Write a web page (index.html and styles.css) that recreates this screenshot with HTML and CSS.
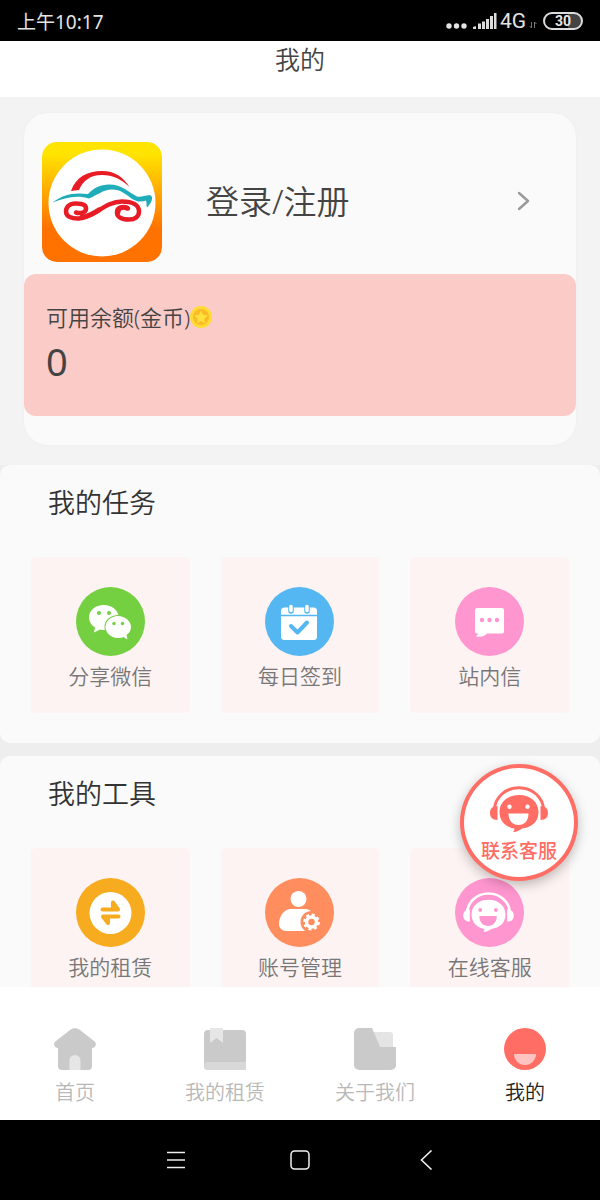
FILE: index.html
```html
<!DOCTYPE html>
<html lang="zh-CN">
<head>
<meta charset="utf-8">
<meta name="viewport" content="width=device-width, initial-scale=1">
<title>我的</title>
<link rel="stylesheet" href="styles.css">
</head>
<body>
<svg class="defs" aria-hidden="true">
  <symbol id="agent" viewBox="0 0 58 46">
    <path d="M4.500 24A24.500 22.300 0 0 1 53.500 24" fill="none" stroke="currentColor" stroke-width="3"/>
    <path d="M7.500 20v14C2 34 0 31 0 27s2-7 7.500-7zM50.500 20v14c5.500 0 7.500-3 7.500-7s-2-7-7.500-7z" fill="currentColor"/>
    <path fill-rule="evenodd" fill="currentColor" d="M29 9C17.500 9 9.500 16 9.500 26c0 9 6 15 14.500 16.500c1 1 0 2-1 3.500c4 0 7-2 9-3.500c10-1 16.500-7 16.500-16.500c0-10-8-17-19.500-17zM19.500 18.500a2.200 2.200 0 1 1 0 4.400a2.200 2.200 0 1 1 0-4.400zM37.500 18.500a2.200 2.200 0 1 1 0 4.400a2.200 2.200 0 1 1 0-4.400zM18.500 27.500h20c0 7-4 11.500-10 11.500s-10-4.500-10-11.500z"/>
  </symbol>
</svg>
<div class="screen">
  <div class="status">
    <span class="time">上午10:17</span>
    <div class="signals">
      <svg width="21" height="20" viewBox="0 0 21 20" fill="#e4e4e4"><circle cx="3" cy="15" r="2.700"/><circle cx="10.500" cy="15" r="2.700"/><circle cx="18" cy="15" r="2.700"/></svg>
      <svg class="bars" width="24" height="20" viewBox="0 0 24 20" fill="#dcdcdc"><path d="M0 18v-2l3-1v3zM5 12.500h3V18H5zM9 10.500h3V18H9zM13 8h3v10h-3zM17 5h3v13h-3zM21 2h2.500v16H21z"/></svg>
      <span class="network">4G</span>
      <svg width="8" height="20" viewBox="0 0 8 20" fill="none" stroke="#777"><path d="M2.500 11v6M2.500 17l-2-2M5.500 17v-6M5.500 11l2 2"/></svg>
      <span class="battery">30</span>
    </div>
  </div>

  <header class="topbar"><h1>我的</h1></header>

  <main class="content">
    <section class="profile">
      <div class="card">
        <a class="login" href="#">
          <svg class="logo" viewBox="0 0 120 120">
            <defs><linearGradient id="sun" x1="0" y1="0" x2="0" y2="1"><stop offset=".1" stop-color="#ffe400"/><stop offset=".4" stop-color="#ffac00"/><stop offset=".72" stop-color="#ff7200"/></linearGradient></defs>
            <rect width="120" height="120" rx="15" fill="url(#sun)"/>
            <circle cx="60" cy="61" r="53.500" fill="#fff"/>
            <path d="M29 49C34 35 45 29 60 29c13 0 21 6 27.500 16C79 37 71 33 60 33c-12 0-19 6-23 15z" fill="#e81c24"/>
            <path d="M10.500 60.500C20 53 31 50 46 52c6-6 12-9.500 21-9.500c13 0 20 8 28 12c5 1 9-2 14-1c3 3-1 9-4 12c-1-2 0-5-1-7c-5 2-9 1-13-1c-7-5-12-10-21-10c-9 0-15 6-23 9c-12-4-24-1-36.500 4z" fill="#20acb8"/>
            <path d="M34 70.500c5 1.500 10 0 10-4c0-4-5-5-10-5c-7 0-10 4-10 8c0 5 6 7.500 13 7c15-1 26-17 43-17c11 0 17 4 17 10c0 5-4 8-10 8c-8 0-12-3-12-7c0-5 5-6.500 11-4" fill="none" stroke="#e81c24" stroke-width="4.500" stroke-linecap="round"/>
            <path d="M76 70c0-4 5-6 9-4M40 75c6 0 12-4 17-7" fill="none" stroke="#e81c24" stroke-width="5" stroke-linecap="round"/>
          </svg>
          <span class="login-text">登录/注册</span>
          <svg class="chevron" width="14" height="20" viewBox="0 0 14 20" fill="none" stroke="#999" stroke-width="2.400" stroke-linecap="round" stroke-linejoin="round"><path d="M2 2l9 8-9 8"/></svg>
        </a>
        <div class="balance">
          <div class="balance-label">可用余额(金币)<svg width="22" height="22" viewBox="0 0 22 22"><circle cx="11" cy="11" r="11" fill="#fddc35"/><circle cx="11" cy="11" r="8" fill="#fdb927"/><path d="M11 4.500l2 4.300 4.700.6-3.400 3.300.8 4.700-4.100-2.300-4.100 2.300.8-4.700-3.400-3.300 4.700-.6z" fill="#ffe23c"/></svg></div>
          <div class="balance-value">0</div>
        </div>
      </div>
    </section>

    <section class="group">
      <h2>我的任务</h2>
      <div class="tiles">
        <a class="tile" href="#">
          <svg class="icon" viewBox="0 0 69 69"><circle cx="34.500" cy="34.500" r="34.500" fill="#74d041"/>
            <path d="M28 18c-9 0-15 5.500-15 12.500c0 4 2 7.500 6 10L18 45.500l6-3c2 .5 4 .6 6 .5L43 30C42 23 36 18 28 18z" fill="#fff"/>
            <ellipse cx="42" cy="40" rx="13.500" ry="12" fill="#74d041"/>
            <path d="M42 29c-7 0-12.500 5-12.500 11S35 51 42 51c2 0 4-.3 5.500-1l4 2.500-1-4.500c3-2 4.500-5 4.500-8c0-6-6-11-13-11z" fill="#fff"/>
            <g fill="#74d041"><circle cx="23" cy="26" r="2"/><circle cx="33" cy="26" r="2"/><circle cx="38" cy="36.500" r="1.700"/><circle cx="46.500" cy="36.500" r="1.700"/></g></svg>
          <span>分享微信</span>
        </a>
        <a class="tile" href="#">
          <svg class="icon" viewBox="0 0 69 69"><circle cx="34.500" cy="34.500" r="34.500" fill="#55b7f1"/>
            <rect x="16" y="20.500" width="36" height="32.500" rx="3.500" fill="#fff"/><path d="M16 28.500h36" stroke="#55b7f1" stroke-width="1.300"/>
            <path d="M26 20v4M42 20v4" stroke="#55b7f1" stroke-width="5.500" stroke-linecap="round"/><path d="M26 19.500v4M42 19.500v4" stroke="#fff" stroke-width="3.500" stroke-linecap="round"/>
            <path d="M26 39l6.500 6.500L42 35.500" fill="none" stroke="#55b7f1" stroke-width="4" stroke-linecap="round" stroke-linejoin="round"/></svg>
          <span>每日签到</span>
        </a>
        <a class="tile" href="#">
          <svg class="icon" viewBox="0 0 69 69"><circle cx="34.500" cy="34.500" r="34.500" fill="#ff96cf"/>
            <path d="M22 21h25a2 2 0 0 1 2 2v21.500a2 2 0 0 1-2 2H32c-2 2.500-6 4-11 3l2.500-3H22a2 2 0 0 1-2-2V23a2 2 0 0 1 2-2z" fill="#fff"/>
            <g fill="#ff96cf"><circle cx="27" cy="33" r="2.200"/><circle cx="34.500" cy="33" r="2.200"/><circle cx="42" cy="33" r="2.200"/></g></svg>
          <span>站内信</span>
        </a>
      </div>
    </section>

    <section class="group">
      <h2>我的工具</h2>
      <div class="tiles">
        <a class="tile" href="#">
          <svg class="icon" viewBox="0 0 69 69"><circle cx="34.500" cy="34.500" r="34.500" fill="#f7ab1f"/><circle cx="34.500" cy="35" r="21" fill="#fff"/>
            <path d="M26.500 31.500H42L37 24.500V31M42.500 38.500H27l5 6.500V39" fill="none" stroke="#f7ab1f" stroke-width="4" stroke-linecap="round" stroke-linejoin="round"/></svg>
          <span>我的租赁</span>
        </a>
        <a class="tile" href="#">
          <svg class="icon" viewBox="0 0 69 69"><circle cx="34.500" cy="34.500" r="34.500" fill="#ff8d5e"/>
            <circle cx="33.500" cy="21" r="8" fill="#fff"/><path d="M26 31h14c3 0 5 1 7 3v19H21c-4 0-7-3-7-7c0-8 5-15 12-15z" fill="#fff"/>
            <circle cx="46.500" cy="44" r="11" fill="#ff8d5e"/><circle cx="46.500" cy="44" r="5" fill="none" stroke="#fff" stroke-width="3.500"/>
            <circle cx="46.500" cy="44" r="7.200" fill="none" stroke="#fff" stroke-width="2.400" stroke-dasharray="3 2.650"/></svg>
          <span>账号管理</span>
        </a>
        <a class="tile" href="#">
          <svg class="icon" viewBox="0 0 69 69"><circle cx="34.500" cy="34.500" r="34.500" fill="#ff96cf"/><use href="#agent" x="8" y="14" width="51" height="40" color="#fff"/></svg>
          <span>在线客服</span>
        </a>
      </div>
    </section>
  </main>

  <nav class="tabs">
    <a href="#"><svg width="42" height="42" viewBox="0 0 42 42"><path d="M16 2c3-2.500 7-2.500 10 0l14 11c4 3 1 7-2 7v18a4 4 0 0 1-4 4H8a4 4 0 0 1-4-4V20c-3 0-6-4-2-7z" fill="#cacaca"/><path d="M15.500 42V32.500a5.500 5.500 0 0 1 11 0V42z" fill="#e6e6e6"/></svg><span>首页</span></a>
    <a href="#"><svg width="42" height="42" viewBox="0 0 42 42"><path d="M4 2h34a4 4 0 0 1 4 4v36H4a4 4 0 0 1-4-4V6a4 4 0 0 1 4-4z" fill="#cacaca"/><path d="M42 34H4a4 4 0 0 0-4 4a4 4 0 0 0 4 4h38z" fill="#d8d8d8"/><path d="M6 0h13v15l-6.500-5L6 15z" fill="#e6e6e6"/></svg><span>我的租赁</span></a>
    <a href="#"><svg width="42" height="42" viewBox="0 0 42 42"><path d="M17 4h19a3 3 0 0 1 3 3v14H20z" fill="#e4e4e4"/><path d="M5 0h13l8 19h16v18a5 5 0 0 1-5 5H5a5 5 0 0 1-5-5V5a5 5 0 0 1 5-5z" fill="#cacaca"/></svg><span>关于我们</span></a>
    <a class="active" href="#" aria-current="page"><svg width="42" height="42" viewBox="0 0 42 42"><circle cx="21" cy="21" r="21" fill="#ff6d64"/><path d="M10 26h22a11 11 0 0 1-22 0z" fill="#ffc4c1"/></svg><span>我的</span></a>
  </nav>

  <div class="system">
    <button aria-label="菜单"><svg width="20" height="20" viewBox="0 0 20 20" stroke="#eee" stroke-width="1.500"><path d="M1 2.500h18M1 10h18M1 17.500h18"/></svg></button>
    <button aria-label="主屏幕"><svg width="20" height="20" viewBox="0 0 20 20" fill="none" stroke="#eee" stroke-width="1.500"><rect x="1" y="1" width="18" height="18" rx="3.500"/></svg></button>
    <button aria-label="返回"><svg width="20" height="20" viewBox="0 0 20 20" fill="none" stroke="#eee" stroke-width="1.600"><path d="M17.500 .5L7.500 10l10 9.500"/></svg></button>
  </div>

  <button class="support"><svg width="58" height="46"><use href="#agent"/></svg><span>联系客服</span></button>
</div>
</body>
</html>
```
FILE: styles.css
```css
* {
  box-sizing: border-box;
}

body,
h1,
h2 {
  margin: 0;
}

body {
  font-family: "Noto Sans", "Noto Sans CJK SC", sans-serif;
  font-weight: 350;
  color: #444;
}

a {
  color: inherit;
  text-decoration: none;
}

button {
  padding: 0;
  border: 0;
  background: none;
  font: inherit;
}

svg {
  display: block;
  flex: none;
}

.defs {
  position: absolute;
  width: 0;
  height: 0;
}

.screen {
  position: relative;
  display: flex;
  flex-direction: column;
  height: 100vh;
  overflow: hidden;
}

.status {
  display: flex;
  flex: none;
  align-items: center;
  justify-content: space-between;
  height: 41px;
  padding: 0 17px;
  background: #000;
  color: #e4e4e4;
}

.time {
  font-size: 19px;
  font-weight: 400;
}

.signals {
  display: flex;
  align-items: center;
  gap: 3px;
}

.bars {
  margin-left: 3px;
}

.network {
  font-family: Roboto, sans-serif;
  font-size: 21px;
  font-weight: 400;
}

.battery {
  display: flex;
  align-items: center;
  justify-content: center;
  width: 40px;
  height: 18px;
  margin-left: 3px;
  border: 2px solid #dcdcdc;
  border-radius: 9px;
  background: linear-gradient(90deg, #000 65%, #444 65%);
  font-family: Roboto, sans-serif;
  font-size: 14px;
  font-weight: 700;
}

.topbar {
  flex: none;
  height: 56px;
  background: #fff;
  text-align: center;
}

.topbar h1 {
  font-size: 25px;
  font-weight: 350;
  line-height: 36px;
}

.content {
  flex: 1;
  min-height: 0;
  overflow: hidden;
  background: #eee;
}

.profile {
  padding: 16px 24px 20px;
  background: #f3f3f3;
}

.card {
  padding-bottom: 29px;
  border-radius: 24px;
  background: #fafafa;
  box-shadow: 0 0 2px #f3e6e6;
}

.login {
  display: flex;
  align-items: center;
  padding: 29px 45px 12px 18px;
}

.logo {
  width: 120px;
  height: 120px;
}

.login-text {
  flex: 1;
  margin-left: 44px;
  font-size: 33px;
  line-height: 48px;
}

.chevron {
  margin-bottom: 3px;
}

.balance {
  padding: 27px 22px;
  border-radius: 12px;
  background: #fbcbc8;
}

.balance-label {
  display: flex;
  align-items: center;
  font-size: 22px;
  line-height: 32px;
}

.balance-value {
  font-size: 38px;
  font-weight: 400;
  line-height: 56px;
}

.group {
  padding: 0 31px 30px;
  border-radius: 10px;
  background: #fafafa;
}

.group + .group {
  margin-top: 13px;
}

.group h2 {
  padding: 0 17px 16px;
  font-size: 27px;
  font-weight: 350;
  line-height: 76px;
  color: #333;
}

.tiles {
  display: grid;
  grid-template-columns: repeat(3, 1fr);
  gap: 31px;
}

.tile {
  display: flex;
  flex-direction: column;
  align-items: center;
  gap: 4px;
  padding: 30px 0 21px;
  border-radius: 5px;
  background: #fdf3f2;
  font-size: 21px;
  line-height: 32px;
  color: #777;
}

.icon {
  width: 69px;
  height: 69px;
}

.tabs {
  display: flex;
  flex: none;
  height: 133px;
  padding-top: 41px;
  background: #fff;
}

.tabs a {
  display: flex;
  flex: 1;
  flex-direction: column;
  align-items: center;
  gap: 7px;
  font-size: 20px;
  line-height: 32px;
  color: #b8b8b8;
}

.tabs .active {
  color: #222;
}

.system {
  display: flex;
  flex: none;
  align-items: center;
  justify-content: center;
  gap: 104px;
  height: 80px;
  background: #000;
}

.support {
  position: absolute;
  right: 22px;
  bottom: 319px;
  display: flex;
  flex-direction: column;
  align-items: center;
  width: 118px;
  height: 117px;
  padding-top: 18px;
  border: 4px solid #ff6d64;
  border-radius: 50%;
  background: #fff;
  box-shadow: 0 4px 12px rgba(0, 0, 0, 0.25);
  font-size: 19px;
  font-weight: 500;
  line-height: 38px;
  color: #ff6d64;
}
```
